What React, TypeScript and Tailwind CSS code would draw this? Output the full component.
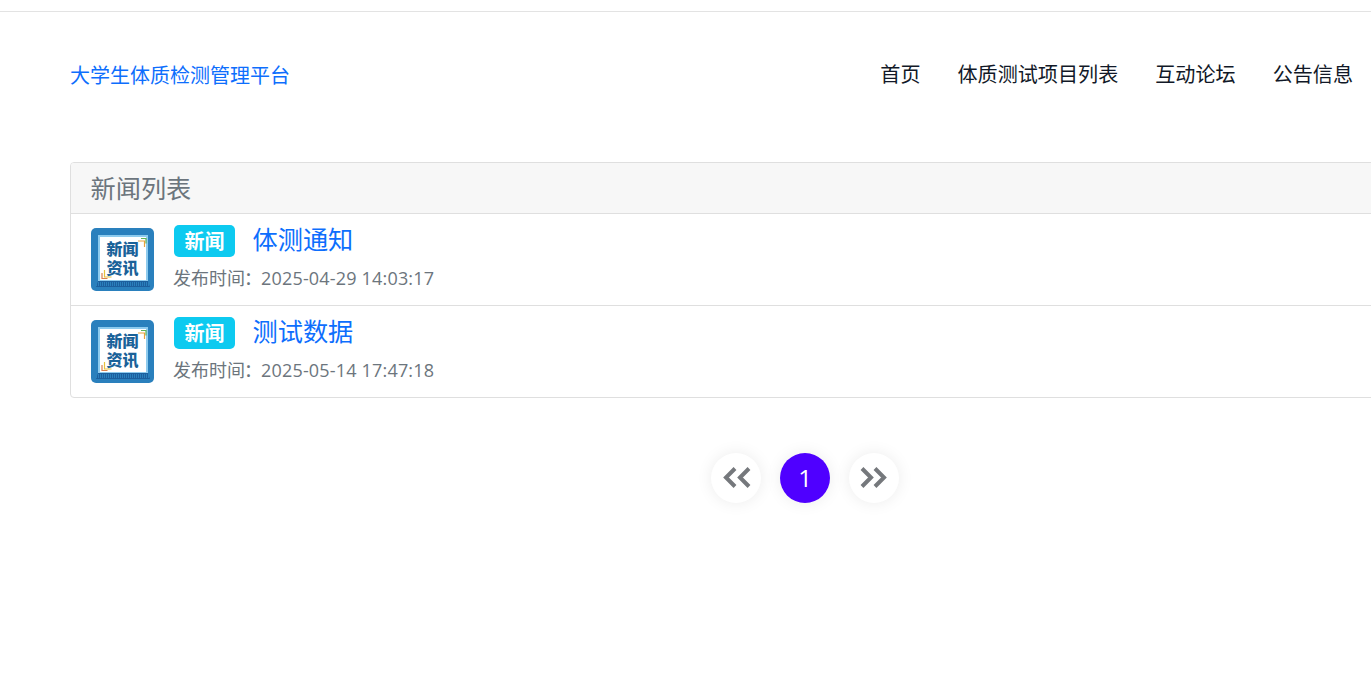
const navItems = ['首页', '体质测试项目列表', '互动论坛', '公告信息'];

const news = [
    { title: '体测通知', time: '2025-04-29 14:03:17' },
    { title: '测试数据', time: '2025-05-14 17:47:18' }
];

function NewsIcon() {
    return (
        <svg width="63" height="63" viewBox="0 0 63 63" className="shrink-0">
            <rect width="63" height="63" rx="5" fill="#2a80bd" />
            <rect x="7" y="7" width="50" height="47" fill="#8ecbee" />
            <rect x="9" y="9" width="46" height="43" fill="#ffffff" />
            <path d="M7 53h50l2 6H5z" fill="#1c5f9e" />
            <path d="M5 56h54" stroke="#2a80bd" strokeWidth="4" strokeDasharray="1 1" />
            <path d="M47 13h6.500v6" fill="none" stroke="#e8a13c" strokeWidth="1.2" />
            <path d="M50 10.500h5v5" fill="none" stroke="#5fb35a" strokeWidth="1.2" />
            <path d="M13.500 42v7h7" fill="none" stroke="#e8c23c" strokeWidth="1.2" />
            <path d="M11 45v5.500h5.500" fill="none" stroke="#d9824e" strokeWidth="1.2" />
            <g
                fontFamily="'Noto Sans CJK SC', sans-serif"
                fontSize="16"
                fontWeight="900"
                fill="#1a6299"
                textAnchor="middle"
            >
                <text x="31.500" y="27">新闻</text>
                <text x="31.500" y="46">资讯</text>
            </g>
        </svg>
    );
}

function PageButton({ children, active }: { children: React.ReactNode; active?: boolean }) {
    return (
        <div
            className={
                active
                    ? 'w-[50px] h-[50px] rounded-full flex items-center justify-center bg-[#4f00ff] text-white text-[24px] shadow-[0_0_16px_rgba(0,0,0,0.08)]'
                    : 'w-[50px] h-[50px] rounded-full flex items-center justify-center bg-white text-[#75787c] shadow-[0_0_16px_rgba(0,0,0,0.08)]'
            }
        >
            {children}
        </div>
    );
}

function Arrows({ d }: { d: string }) {
    return (
        <svg width="50" height="50" viewBox="0 0 50 50" fill="none" stroke="currentColor" strokeWidth="4">
            <path d={d} />
        </svg>
    );
}

export default function App() {
    return (
        <div className="h-[697px] overflow-hidden bg-white font-['Open_Sans','Noto_Sans_CJK_SC',sans-serif]">
            <div className="h-3 border-b border-[#e3e3e3]" />
            <div className="w-[1470px] ml-[70px]">
                <header className="flex items-center justify-between h-[126px] w-[1301px] pt-px">
                    <a className="text-[20px] text-[#0d6efd]">大学生体质检测管理平台</a>
                    <nav className="flex gap-[37px] mr-[18px] text-[20.100px] text-[#111827]">
                        {navItems.map((item) => (
                            <a key={item}>{item}</a>
                        ))}
                    </nav>
                </header>

                <div className="mt-6 border border-[#dfdfdf] rounded-[4px] overflow-hidden">
                    <div className="h-[51px] pl-[19.500px] pt-[2px] flex items-center bg-[#f7f7f7] border-b border-[#dfdfdf] text-[25.200px] text-[#6c757d]">
                        新闻列表
                    </div>
                    {news.map((item, i) => (
                        <div
                            key={item.title}
                            className={
                                i < news.length - 1
                                    ? 'h-[92px] flex gap-[19px] pl-5 pt-[14px] border-b border-[#dfdfdf]'
                                    : 'h-[91px] flex gap-[19px] pl-5 pt-[14px]'
                            }
                        >
                            <NewsIcon />
                            <div className="-mt-[3px]">
                                <div className="flex items-center gap-[17.500px] h-8">
                                    <span className="w-[61px] h-8 ml-px pt-[2px] rounded-[5px] bg-[#0dcaf0] text-white text-[20px] font-bold flex items-center justify-center">
                                        新闻
                                    </span>
                                    <span className="text-[25.200px] text-[#0d6efd] -mt-[3px]">{item.title}</span>
                                </div>
                                <p className="mt-2 text-[18px] text-[#6c757d]">
                                    发布时间<span className="-ml-px">：</span>
                                    <span className="-ml-px tracking-[0.18px]">{item.time}</span>
                                </p>
                            </div>
                        </div>
                    ))}
                </div>

                <div className="flex justify-center gap-[19px] mt-[55px]">
                    <PageButton>
                        <Arrows d="M24 15.500 15 24.500l9 9M38 15.500 29 24.500l9 9" />
                    </PageButton>
                    <PageButton active>1</PageButton>
                    <PageButton>
                        <Arrows d="M13 15.500l9 9-9 9M26 15.500l9 9-9 9" />
                    </PageButton>
                </div>
            </div>
        </div>
    );
}
